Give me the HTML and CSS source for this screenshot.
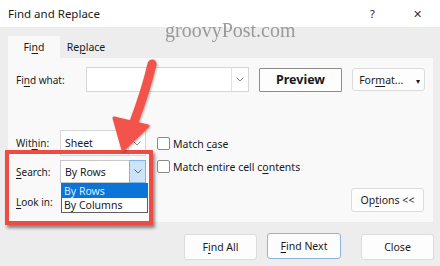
FILE: index.html
```html
<!doctype html>
<html lang="en">
<head>
    <meta charset="UTF-8">
    <title>Find and Replace</title>
    <link rel="stylesheet" href="styles.css">
</head>
<body>
<div class="dialog">
    <div class="titlebar">
        <span class="title">Find and Replace</span>
        <span class="help">?</span>
        <span class="close-x">&#x2715;</span>
    </div>
    <div class="tabs">
        <div class="tab active">Fi<u>n</u>d</div>
        <div class="tab">Re<u>p</u>lace</div>
    </div>
    <div class="panel">
        <div class="row-find">
            <span class="label">Fi<u>n</u>d what:</span>
            <div class="combo wide">
                <span class="value"></span>
                <span class="chev"><svg width="8" height="5" viewBox="0 0 8 5"><polyline points="0.5,0.5 4,4 7.5,0.5" fill="none" stroke="#8a8a8a" stroke-width="1"/></svg></span>
            </div>
            <button class="btn preview">Preview</button>
            <button class="btn format">For<u>m</u>at... <span class="caret">&#9662;</span></button>
        </div>
        <div class="lower">
            <div class="fields">
                <span class="label">Wit<u>h</u>in:</span>
                <div class="combo">
                    <span class="value">Sheet</span>
                    <span class="chev"><svg width="8" height="5" viewBox="0 0 8 5"><polyline points="0.5,0.5 4,4 7.5,0.5" fill="none" stroke="#8a8a8a" stroke-width="1"/></svg></span>
                </div>
                <span class="label"><u>S</u>earch:</span>
                <div class="combo open">
                    <span class="value">By Rows</span>
                    <span class="chev"><svg width="8" height="5" viewBox="0 0 8 5"><polyline points="0.5,0.5 4,4 7.5,0.5" fill="none" stroke="#5a6f86" stroke-width="1"/></svg></span>
                    <ul class="list">
                        <li class="selected">By Rows</li>
                        <li>By Columns</li>
                    </ul>
                </div>
                <span class="label"><u>L</u>ook in:</span>
                <div class="combo hidden"></div>
            </div>
            <div class="checks">
                <label class="check"><span class="box"></span><span>Match <u>c</u>ase</span></label>
                <label class="check"><span class="box"></span><span>Match entire cell c<u>o</u>ntents</span></label>
            </div>
            <button class="btn options">Op<u>t</u>ions &lt;&lt;</button>
        </div>
    </div>
    <div class="actions">
        <button class="btn">F<u>i</u>nd All</button>
        <button class="btn default"><u>F</u>ind Next</button>
        <button class="btn close">Close</button>
    </div>
</div>

<div class="watermark">groovyPost.com</div>
<div class="highlight"></div>
<svg class="arrow" width="440" height="266" viewBox="0 0 440 266">
    <path d="M152 64 Q146 90 134 122" fill="none" stroke="#f2534a" stroke-width="9" stroke-linecap="round"/>
    <polygon points="114,118 148,126 123,150" fill="#f2534a" stroke="#f2534a" stroke-width="3" stroke-linejoin="round"/>
</svg>
</body>
</html>
```

FILE: styles.css
```css
* {
    box-sizing: border-box;
}

body {
    margin: 0;
    width: 440px;
    height: 266px;
    overflow: hidden;
    background: #ededed;
    font-family: "Noto Sans", "Open Sans", sans-serif;
    font-size: 10px;
    color: #1a1a1a;
    position: relative;
}

u {
    text-decoration-thickness: 1px;
    text-underline-offset: 2px;
}

.titlebar {
    height: 27px;
    background: #fff;
    display: flex;
    align-items: center;
    padding: 0 9px 0 8px;
    font-size: 11.5px;
}

.title {
    flex: 1;
}

.help {
    width: 14px;
    margin-right: 29px;
    font-size: 11px;
}

.close-x {
    width: 18px;
    font-size: 11px;
    color: #333;
}

.tabs {
    display: flex;
    margin: 9px 0 0 8px;
    height: 22px;
}

.tab {
    width: 52px;
    text-align: center;
    line-height: 22px;
    font-size: 10.5px;
}

.tab.active {
    background: #f9f9f9;
}

.panel {
    margin: 0 7px 0 8px;
    height: 164px;
    background: #f9f9f9;
    padding: 9px 0 0 8px;
}

.label {
    white-space: nowrap;
}

.row-find {
    display: flex;
    align-items: center;
    height: 25px;
}

.row-find .label {
    width: 70px;
}

.combo {
    position: relative;
    height: 26px;
    width: 86px;
    background: #fff;
    border: 1px solid #d6d6d6;
    display: flex;
    align-items: center;
    font-size: 10.5px;
}

.combo.wide {
    width: 163px;
    height: 25px;
}

.combo .value {
    flex: 1;
    padding-left: 4px;
}

.chev {
    width: 17px;
    height: 100%;
    display: flex;
    align-items: center;
    justify-content: center;
    border-left: 1px solid #e2e2e2;
}

.btn {
    font-family: inherit;
    font-size: 10.5px;
    color: #1a1a1a;
    background: #fdfdfd;
    border: 1px solid #dcdcdc;
    border-radius: 3px;
    height: 26px;
    width: 73px;
    padding: 0;
    white-space: nowrap;
}

.preview {
    margin-left: 10px;
    width: 83px;
    height: 24px;
    border: 1px solid #8c8c8c;
    border-radius: 1px;
    font-weight: bold;
    font-size: 12.5px;
}

.format {
    margin-left: 10px;
    height: 23px;
    text-align: right;
    padding-right: 4px;
}

.caret {
    font-size: 8px;
    margin-left: 10px;
}

.lower {
    display: flex;
    margin-top: 38px;
}

.fields {
    display: grid;
    grid-template-columns: 44px 86px;
    grid-template-rows: 26px 23px 30px;
    row-gap: 4px;
    align-items: center;
}

.fields .combo {
    height: 100%;
}

.combo.open {
    border-color: #c8c8c8;
}

.combo.open .chev {
    background: #cde4f7;
    border: 1px solid #7eb4ea;
    height: 23px;
    margin: -1px -1px -1px 0;
}

.combo.hidden {
    visibility: hidden;
}

.list {
    position: absolute;
    left: 0;
    top: 22px;
    width: 87px;
    margin: 0;
    padding: 0;
    list-style: none;
    background: #fff;
    border: 1px solid #5f5f5f;
    z-index: 2;
}

.list li {
    height: 14px;
    line-height: 14px;
    padding-left: 2px;
}

.list .selected {
    background: #0a74d8;
    color: #d8ecff;
}

.checks {
    display: flex;
    flex-direction: column;
    gap: 10px;
    margin: 7px 0 0 11px;
    width: 180px;
    font-size: 10.5px;
}

.check {
    display: flex;
    align-items: center;
    height: 13px;
    white-space: nowrap;
}

.box {
    width: 13px;
    height: 13px;
    border: 1px solid #8a8a8a;
    border-radius: 2px;
    background: #fff;
    margin-right: 3px;
}

.options {
    margin: 58px 0 0 14px;
    height: 24px;
}

.actions {
    display: flex;
    justify-content: flex-end;
    gap: 10px;
    margin-top: 12px;
    padding-right: 6px;
}

.actions .default {
    border-color: #8fb3d9;
    width: 74px;
    margin-top: -1px;
}

.actions .close {
    margin-left: 10px;
}

.watermark {
    position: absolute;
    left: 165px;
    top: 19px;
    font-family: "Liberation Serif", "DejaVu Serif", serif;
    font-size: 20px;
    color: #8c8c8c;
    opacity: 0.85;
}

.highlight {
    position: absolute;
    left: 5px;
    top: 150px;
    width: 148px;
    height: 75px;
    border: 4px solid #ef4b43;
    box-shadow: 2px 3px 3px rgba(0, 0, 0, 0.45);
}

.arrow {
    position: absolute;
    left: 0;
    top: 0;
    filter: drop-shadow(1px 1px 1px rgba(0, 0, 0, 0.3));
}
```
